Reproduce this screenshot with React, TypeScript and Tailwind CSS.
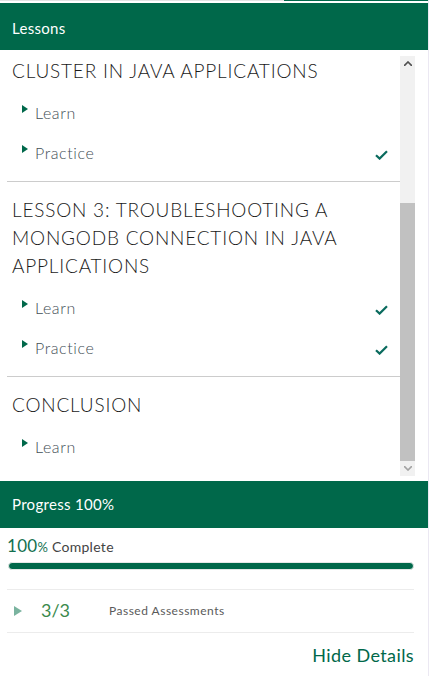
import React from "react";

type Item = { label: string; done: boolean };
type Section = { title: string; items: Item[] };

const sections: Section[] = [
  {
    title: "CLUSTER IN JAVA APPLICATIONS",
    items: [
      { label: "Learn", done: false },
      { label: "Practice", done: true },
    ],
  },
  {
    title: "LESSON 3: TROUBLESHOOTING A MONGODB CONNECTION IN JAVA APPLICATIONS",
    items: [
      { label: "Learn", done: true },
      { label: "Practice", done: true },
    ],
  },
  {
    title: "CONCLUSION",
    items: [{ label: "Learn", done: false }],
  },
];

function Check() {
  return (
    <svg width="13" height="10" viewBox="0 0 13 10" fill="none">
      <path d="M1 5.2l3.6 3.4L12 1.2" stroke="#0a6b5e" strokeWidth="2.2" />
    </svg>
  );
}

function Caret({ color }: { color: string }) {
  return (
    <svg width="6" height="8" viewBox="0 0 6 8">
      <path d="M0 0l6 4-6 4z" fill={color} />
    </svg>
  );
}

function Scrollbar() {
  return (
    <div className="mt-[6px] mb-[4px] flex w-[15px] shrink-0 flex-col bg-[#f1f1f1]">
      <div className="flex h-[15px] items-center justify-center">
        <svg width="8" height="5" viewBox="0 0 8 5">
          <path d="M0 5l4-4 4 4" stroke="#505050" strokeWidth="1.6" fill="none" />
        </svg>
      </div>
      <div className="h-[132px]" />
      <div className="flex-1 bg-[#c1c1c1]" />
      <div className="flex h-[15px] items-center justify-center">
        <svg width="8" height="5" viewBox="0 0 8 5">
          <path d="M0 0l4 4 4-4" stroke="#a3a3a3" strokeWidth="1.6" fill="none" />
        </svg>
      </div>
    </div>
  );
}

export default function App() {
  return (
    <div
      className="w-[429px] h-[676px] overflow-hidden bg-white border-r border-[#ebe8f2]"
      style={{ fontFamily: '"Lato", "Noto Sans", sans-serif' }}
    >
      <div className="flex h-[3px] items-start">
        <div className="h-px w-[284px] bg-[#e3e3e3]" />
        <div className="h-px flex-1 bg-[#00684a]" />
      </div>
      <div className="flex h-[47px] items-center bg-[#00684a] px-3 pt-[3px] text-[15px] tracking-[0.3px] text-white">
        Lessons
      </div>

      <div className="flex h-[430px]">
        <div className="w-[400px] overflow-hidden">
          {sections.map((s, i) => (
            <div
              key={i}
              className={
                i === 0
                  ? "ml-[7px] -mt-[7px] pt-[14px] pb-[8px] border-b border-[#cccccc]"
                  : i === 1
                  ? "ml-[7px] pt-[14px] pb-[8px] border-b border-[#cccccc]"
                  : "ml-[7px] pt-[14px] pb-[8px]"
              }
            >
              <h2 className="pl-[5px] pr-10 text-[19px] font-light leading-[28px] tracking-[0.8px] text-[#1a1a1a]">
                {s.title}
              </h2>
              <div className="mt-2">
                {s.items.map((it, j) => (
                  <div key={j} className="flex h-10 items-center pl-[15px] pr-[12px]">
                    <div className="mb-[9px] mr-[7px]">
                      <Caret color="#00684a" />
                    </div>
                    <span className="flex-1 text-[16px] font-light tracking-[0.6px] text-[#3f4e55]">{it.label}</span>
                    {it.done && (
                      <div className="mt-[3px]">
                        <Check />
                      </div>
                    )}
                  </div>
                ))}
              </div>
            </div>
          ))}
        </div>
        <Scrollbar />
      </div>

      <div className="mt-px flex h-[47px] items-center bg-[#00684a] px-3 text-[15px] tracking-[0.3px] text-white">
        Progress 100%
      </div>

      <div className="pl-[7px] pr-[14px] pt-[8px]">
        <div className="flex items-baseline">
          <span className="text-[17px] leading-5 tracking-[0.3px] text-[#13704f]">100</span>
          <span className="text-[13px] text-[#13704f]">%</span>
          <span className="ml-1 text-[14px] tracking-[0.3px] text-[#444444]">Complete</span>
        </div>
        <div className="mt-[4px] ml-px h-[8px] rounded-full border border-[#e4e9e7] bg-[#00684a]" />
        <div className="mt-[19px] border-t border-[#ececec]" />
        <div className="flex h-[42px] items-center">
          <div className="ml-[7px] mr-[19px]">
            <svg width="8" height="10" viewBox="0 0 8 10">
              <path d="M0 0l8 5-8 5z" fill="#7ab39f" />
            </svg>
          </div>
          <span className="w-[68px] text-[18px] text-[#3b8a4c]">3/3</span>
          <span className="text-[12px] tracking-[0.5px] text-[#5a5a5a]">Passed Assessments</span>
        </div>
        <div className="border-t border-[#ececec]" />
        <div className="flex justify-end pt-[9px]">
          <span className="text-[18px] tracking-[0.4px] text-[#00684a]">Hide Details</span>
        </div>
      </div>
    </div>
  );
}
